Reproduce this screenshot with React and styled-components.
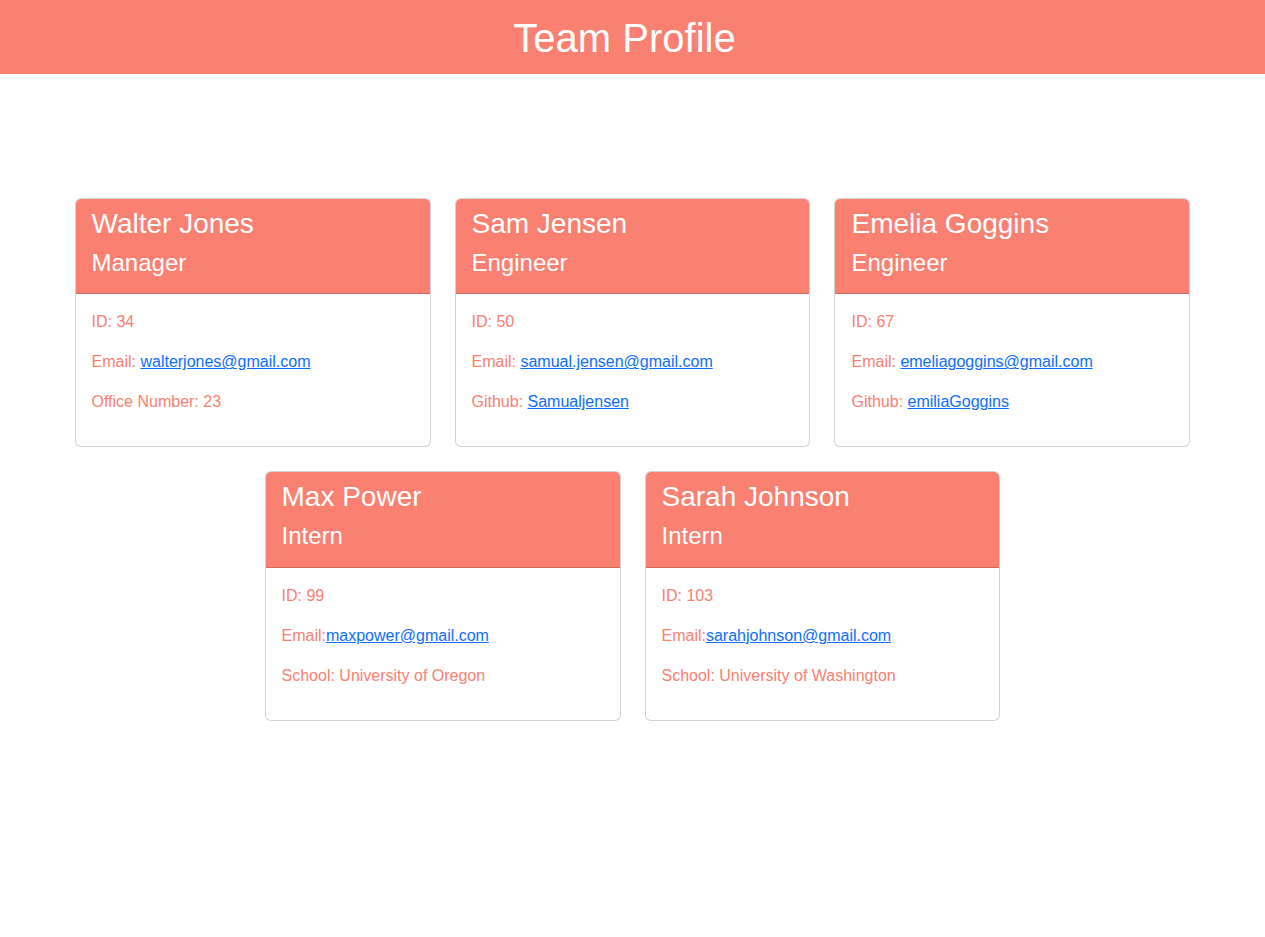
import React from "react";
import styled, { createGlobalStyle } from "styled-components";

const Global = createGlobalStyle`
  *, *::before, *::after { box-sizing: border-box; }
  body {
    margin: 0;
    font-family: "Liberation Sans", Arial, sans-serif;
    font-size: 16px;
    line-height: 1.5;
    color: #212529;
    background: #fff;
  }
`;

const Header = styled.header`
  background: #fa8072;
  height: 74px;
  display: flex;
  align-items: center;
  justify-content: center;
  padding: 2px 16px 0 0;
`;

const Title = styled.h1`
  margin: 0;
  color: #fff;
  font-size: 40px;
  font-weight: 400;
  line-height: 1.2;
`;

const Container = styled.main`
  max-width: 1140px;
  margin: 124px auto 0;
  padding: 0 12px;
`;

const Row = styled.div`
  display: flex;
  flex-wrap: wrap;
  justify-content: center;
  margin: 0 -12px;
`;

const Col = styled.div`
  flex: 0 0 33.3333%;
  max-width: 33.3333%;
  padding: 0 12px;
  margin-bottom: 24px;
`;

const Card = styled.div`
  border: 1px solid rgba(0, 0, 0, 0.175);
  border-radius: 6px;
  overflow: hidden;
  background: #fff;
`;

const CardHeader = styled.div`
  background: #fa8072;
  color: #fff;
  padding: 8px 16px;
  border-bottom: 1px solid rgba(0, 0, 0, 0.175);
`;

const Name = styled.h3`
  margin: 0 0 8px;
  font-size: 28px;
  font-weight: 400;
  line-height: 1.2;
`;

const Role = styled.h4`
  margin: 0 0 8px;
  font-size: 24px;
  font-weight: 400;
  line-height: 1.2;
`;

const CardBody = styled.div`
  padding: 16px 16px 0;
`;

const Info = styled.p`
  margin: 0 0 16px;
  color: #fa8072;
  font-size: 16px;
  line-height: 24px;
  &:last-child { margin-bottom: 32px; }
`;

const Link = styled.a`
  color: #0d6efd;
  text-decoration: underline;
`;

const row1 = [
  { name: "Walter Jones", role: "Manager", id: 34, email: "walterjones@gmail.com", sep: " ", extra: ["Office Number: 23"] },
  { name: "Sam Jensen", role: "Engineer", id: 50, email: "samual.jensen@gmail.com", sep: " ", extra: ["Github: ", "Samualjensen"] },
  { name: "Emelia Goggins", role: "Engineer", id: 67, email: "emeliagoggins@gmail.com", sep: " ", extra: ["Github: ", "emiliaGoggins"] },
];
const row2 = [
  { name: "Max Power", role: "Intern", id: 99, email: "maxpower@gmail.com", sep: "", extra: ["School: University of Oregon"] },
  { name: "Sarah Johnson", role: "Intern", id: 103, email: "sarahjohnson@gmail.com", sep: "", extra: ["School: University of Washington"] },
];

function Member({ m }) {
  return (
    <Col>
      <Card>
        <CardHeader>
          <Name>{m.name}</Name>
          <Role>{m.role}</Role>
        </CardHeader>
        <CardBody>
          <Info>ID: {m.id}</Info>
          <Info>
            Email:{m.sep}
            <Link href={`mailto:${m.email}`}>{m.email}</Link>
          </Info>
          <Info>
            {m.extra[0]}
            {m.extra[1] && <Link href="#">{m.extra[1]}</Link>}
          </Info>
        </CardBody>
      </Card>
    </Col>
  );
}

export default function App() {
  return (
    <>
      <Global />
      <Header>
        <Title>Team Profile</Title>
      </Header>
      <Container>
        <Row>
          {row1.map((m) => <Member key={m.name} m={m} />)}
        </Row>
        <Row>
          {row2.map((m) => <Member key={m.name} m={m} />)}
        </Row>
      </Container>
    </>
  );
}
